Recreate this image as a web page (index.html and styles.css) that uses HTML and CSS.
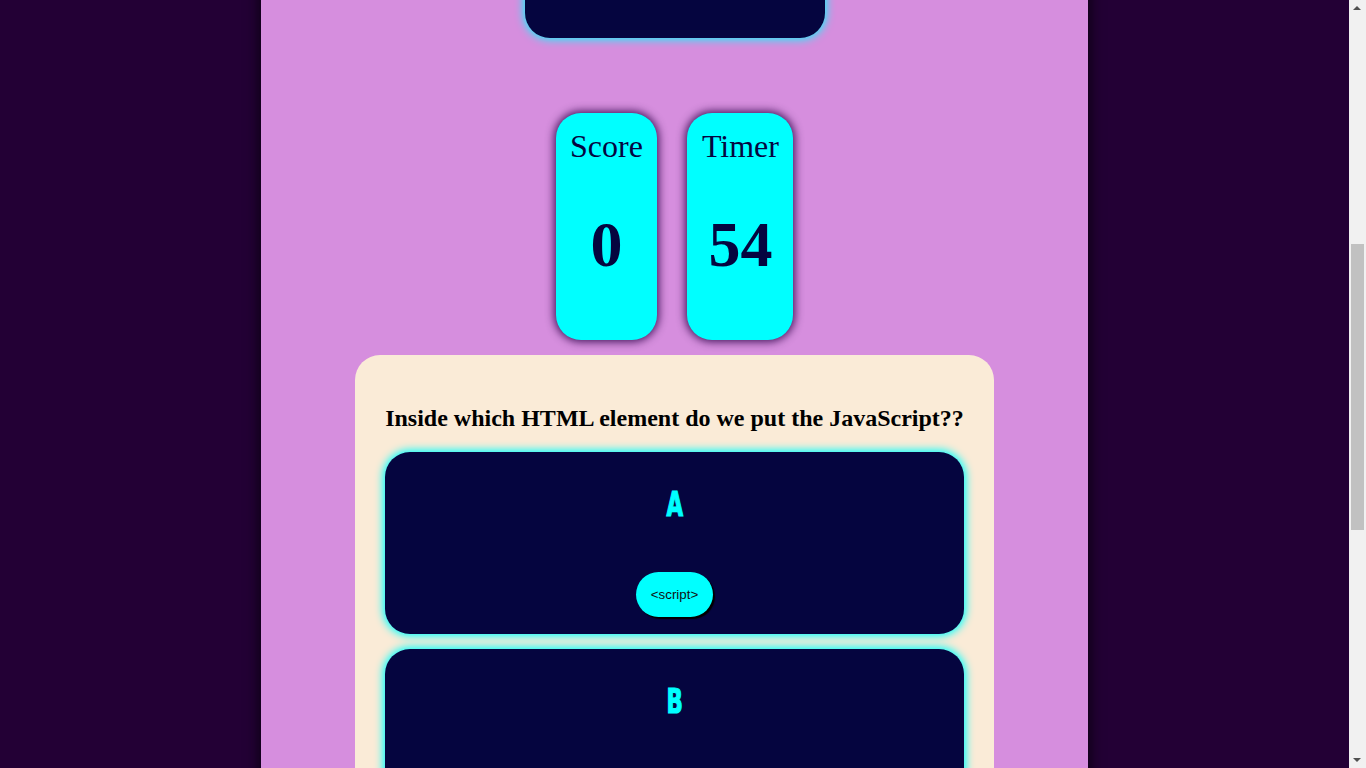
FILE: index.html
```html
<!DOCTYPE html>
<html lang="en">
<head>
<meta charset="utf-8">
<title>JavaScript Quiz</title>
<link rel="stylesheet" href="styles.css">
</head>
<body>
<main class="page">
  <header class="masthead"></header>
  <section class="intro-box"></section>

  <section class="stats">
    <div class="stat">
      <div class="stat-label">Score</div>
      <div class="stat-value">0</div>
    </div>
    <div class="stat">
      <div class="stat-label">Timer</div>
      <div class="stat-value">54</div>
    </div>
  </section>

  <section class="quiz">
    <h2 class="question">Inside which HTML element do we put the JavaScript??</h2>
    <div class="options">
      <div class="option">
        <div class="letter"><span>A</span></div>
        <button class="answer">&lt;script&gt;</button>
      </div>
      <div class="option">
        <div class="letter"><span>B</span></div>
        <button class="answer">&lt;javascript&gt;</button>
      </div>
      <div class="option">
        <div class="letter"><span>C</span></div>
        <button class="answer">&lt;js&gt;</button>
      </div>
      <div class="option">
        <div class="letter"><span>D</span></div>
        <button class="answer">&lt;scripting&gt;</button>
      </div>
    </div>
  </section>
</main>
<div class="scrollbar" aria-hidden="true">
  <div class="sb-arrow sb-up"></div>
  <div class="sb-thumb"></div>
  <div class="sb-arrow sb-down"></div>
</div>
<script src="script.js"></script>
</body>
</html>
```

FILE: styles.css
```css
html, body {
  margin: 0;
  padding: 0;
}

body {
  margin-right: 17px;
  background: #230035;
  font-family: "Liberation Serif", "Times New Roman", serif;
}

.page {
  width: 827px;
  min-height: 1971px;
  margin: 0 auto;
  background: #d68ede;
  box-shadow: 0 0 12px 2px #0b0011;
  display: flex;
  flex-direction: column;
  align-items: center;
}

.masthead {
  height: 327px;
}

.intro-box {
  margin-top: 40px;
  width: 300px;
  height: 280px;
  background: #05053f;
  border-radius: 25px;
  box-shadow: 0 0 10px 1px #00ffff;
}

.stats {
  display: flex;
  gap: 30px;
  justify-content: center;
  margin-top: 75px;
}

.stat {
  height: 227px;
  box-sizing: border-box;
  padding: 15px 14.5px 0;
  background: #00ffff;
  border-radius: 25px;
  box-shadow: 0 0 9px 2px rgba(45, 0, 70, 0.85);
  color: #05053f;
  text-align: center;
}

.stat-label {
  font-size: 32px;
}

.stat-value {
  margin-top: 43px;
  font-size: 64px;
  font-weight: bold;
}

.quiz {
  margin-top: 15px;
  width: 639px;
  box-sizing: border-box;
  padding: 50px 30px 30px;
  background: #faebd7;
  border-radius: 25px;
}

.question {
  margin: 0 0 20px;
  font-size: 24px;
  font-weight: bold;
  text-align: center;
  color: #000;
}

.options {
  display: flex;
  flex-direction: column;
  gap: 15px;
}

.option {
  height: 182px;
  box-sizing: border-box;
  padding: 32px 0 17px;
  background: #05053f;
  border-radius: 25px;
  box-shadow: 0 0 9px 2px #00ffff;
  display: flex;
  flex-direction: column;
  align-items: center;
}

.letter {
  height: 40px;
  line-height: 40px;
  font-family: "DejaVu Sans Condensed", "DejaVu Sans", sans-serif;
  font-weight: bold;
  font-size: 34px;
  color: #00ffff;
  -webkit-text-stroke: 1.2px #00ffff;
}

.letter span {
  display: inline-block;
  transform: scaleX(0.7);
}

.answer {
  margin-top: 48px;
  height: 45px;
  padding: 0 15px;
  border: none;
  border-radius: 23px;
  background: #00ffff;
  color: #111;
  font-family: "Liberation Sans", Arial, sans-serif;
  font-size: 13.33px;
  box-shadow: 2px 2px 1px #000;
}

.scrollbar {
  position: fixed;
  top: 0;
  right: 0;
  width: 17px;
  height: 100vh;
  background: #f1f1f1;
}

.sb-thumb {
  position: absolute;
  top: 244px;
  left: 2px;
  width: 13px;
  height: 286px;
  background: #c1c1c1;
}

.sb-arrow {
  position: absolute;
  left: 4px;
  width: 0;
  height: 0;
  border-left: 4.5px solid transparent;
  border-right: 4.5px solid transparent;
}

.sb-up {
  top: 6px;
  border-bottom: 4px solid #505050;
}

.sb-down {
  bottom: 6px;
  border-top: 4px solid #505050;
}
```

FILE: script.js
```js
function jumpToQuiz() {
  window.scrollTo(0, 609);
}
jumpToQuiz();
window.addEventListener('load', jumpToQuiz);
```
